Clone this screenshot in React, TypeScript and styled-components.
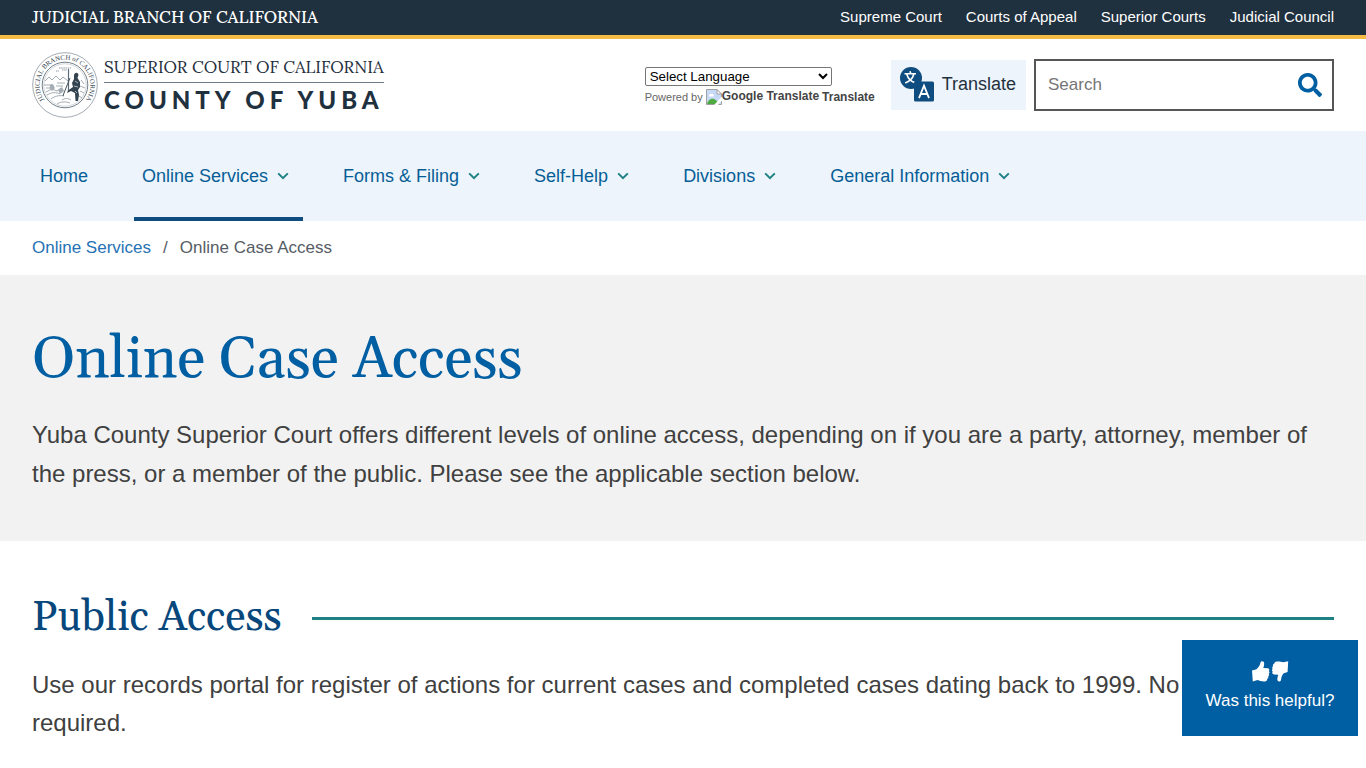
import React from "react";
import styled, { createGlobalStyle } from "styled-components";
import { FaSearch } from "react-icons/fa";

const color = {
  ink: "#1f303e",
  gold: "#f4bc45",
  blue: "#005ea2",
  navy: "#0f4c7f",
  heading: "#07477c",
  pale: "#edf4fb",
  teal: "#1f8083",
  text: "#404040",
  grey: "#f2f2f2",
};

const serif = `Gelasio, Georgia, "Liberation Serif", serif`;

const GlobalStyle = createGlobalStyle`
  *, *::before, *::after { box-sizing: border-box; }
  body {
    margin: 0;
    background: #fff;
    color: ${color.text};
    font-family: "Liberation Sans", Arial, sans-serif;
    font-size: 16px;
  }
  a { color: inherit; text-decoration: none; }
`;

const TopBar = styled.div`
  display: flex;
  justify-content: space-between;
  align-items: center;
  height: 39px;
  padding: 0 32px 2px;
  background: ${color.ink};
  border-bottom: 4px solid ${color.gold};
  color: #fff;
`;

const BranchLink = styled.a`
  font-family: Lora, "Liberation Serif", serif;
  font-size: 17px;
  line-height: 20px;
  font-weight: 500;
`;

const TopLinks = styled.nav`
  display: flex;
  gap: 24px;
  font-size: 15px;
  line-height: 20px;
`;

const Masthead = styled.header`
  display: flex;
  align-items: center;
  justify-content: space-between;
  height: 92px;
  padding: 0 32px;
`;

const Brand = styled.a`
  display: flex;
  align-items: center;
  gap: 6px;
  color: ${color.ink};
`;

const Wordmark = styled.span`
  display: flex;
  flex-direction: column;
  padding-bottom: 2px;
`;

const CourtName = styled.span`
  padding-bottom: 3px;
  border-bottom: 1px solid #6f7b86;
  font-family: Lora, "Liberation Serif", serif;
  font-size: 17px;
  line-height: 24px;
`;

const CountyName = styled.span`
  padding-top: 4px;
  font-family: Lato, sans-serif;
  font-size: 24px;
  line-height: 26px;
  font-weight: 900;
  letter-spacing: 5px;
`;

const Tools = styled.div`
  display: flex;
  align-items: center;
`;

const LanguageWidget = styled.div`
  width: 230px;
  margin-right: 16px;
  padding-top: 4px;
  font-size: 11px;
  color: #666;
`;

const LanguageSelect = styled.select`
  display: block;
  width: 187px;
  height: 19px;
  padding: 0;
  border: 1px solid #767676;
  border-radius: 2px;
  background: #fff;
  color: #000;
  font-family: inherit;
`;

const PoweredBy = styled.div`
  display: flex;
  align-items: center;
  height: 22px;
  white-space: nowrap;
`;

const GoogleLink = styled.a`
  display: flex;
  align-items: center;
  margin-left: 3px;
  color: #444;
  font-size: 12px;
  font-weight: 700;
`;

const GoogleMark = styled.span`
  display: flex;
  align-items: flex-start;
  height: 16px;
  margin-right: 3px;
  line-height: 14px;
`;

const TranslateButton = styled.button`
  display: flex;
  align-items: center;
  gap: 8px;
  height: 50px;
  margin-right: 8px;
  padding: 0 10px 2px 9px;
  border: 0;
  background: ${color.pale};
  color: ${color.ink};
  font-family: inherit;
  font-size: 18px;
`;

const SearchForm = styled.form`
  display: flex;
  align-items: center;
  width: 300px;
  height: 52px;
  border: 2px solid #565656;
`;

const SearchInput = styled.input`
  flex: 1;
  min-width: 0;
  height: 100%;
  padding: 0 12px;
  border: 0;
  outline: 0;
  background: transparent;
  font-family: inherit;
  font-size: 17px;
  &::placeholder { color: #757575; }
`;

const SearchButton = styled.button`
  display: flex;
  padding: 0 10px;
  border: 0;
  background: transparent;
  color: ${color.blue};
`;

const MainNav = styled.nav`
  display: flex;
  gap: 32px;
  height: 90px;
  padding: 0 32px;
  background: ${color.pale};
`;

const NavItem = styled.a<{ $active?: boolean }>`
  display: flex;
  align-items: center;
  gap: 9px;
  padding: 4px 14px 0 8px;
  border-bottom: 4px solid ${(p) => (p.$active ? color.navy : "transparent")};
  color: #075e97;
  font-size: 18px;
  white-space: nowrap;
`;

const Breadcrumb = styled.nav`
  display: flex;
  align-items: center;
  gap: 12px;
  height: 54px;
  padding: 0 32px;
  color: #565c65;
  font-size: 17px;
`;

const CrumbLink = styled.a`
  color: #2672b5;
`;

const Hero = styled.section`
  padding: 48px 32px;
  background: ${color.grey};
`;

const PageTitle = styled.h1`
  margin: 0 0 18px;
  color: ${color.blue};
  font-family: ${serif};
  font-size: 58px;
  font-weight: 400;
  line-height: 74px;
`;

const Lead = styled.p`
  margin: 0;
  font-size: 24px;
  line-height: 39px;
`;

const Content = styled.main`
  padding: 48px 32px;
`;

const SectionTitle = styled.h2`
  display: flex;
  align-items: center;
  gap: 30px;
  margin: 0 0 19px;
  color: ${color.heading};
  font-family: ${serif};
  font-size: 42px;
  font-weight: 400;
  line-height: 58px;
  &::after {
    content: "";
    flex: 1;
    height: 3px;
    background: ${color.teal};
  }
`;

const Body = styled.p`
  margin: 0;
  font-size: 24px;
  line-height: 38px;
`;

const Feedback = styled.button`
  position: fixed;
  right: 8px;
  bottom: 32px;
  display: flex;
  flex-direction: column;
  align-items: center;
  width: 176px;
  height: 96px;
  padding: 20px 0 0;
  border: 0;
  background: ${color.blue};
  color: #fff;
  font-family: inherit;
  font-size: 17px;
  line-height: 34px;
`;

function Seal() {
  return (
    <svg width="66" height="66" viewBox="0 0 66 66" fill="none" aria-hidden="true">
      <defs>
        <path id="seal-ring" d="M14.3 50.2 A25.4 25.4 0 1 1 51.7 50.2" />
      </defs>
      <circle cx="33" cy="33" r="32.3" stroke="#7b8792" strokeWidth=".7" />
      <circle cx="33" cy="33" r="22.8" stroke="#4f5e6b" strokeWidth=".8" />
      <circle cx="33" cy="33" r="21.2" stroke="#a4adb5" strokeWidth=".5" />
      <text fontFamily="Liberation Serif, serif" fontSize="6.8" fill="#33434f">
        <textPath href="#seal-ring" startOffset="50%" textAnchor="middle">
          JUDICIAL BRANCH of CALIFORNIA
        </textPath>
      </text>
      <path d="M27 16h12M24 19h3m3-1h5" stroke="#8a959f" strokeWidth="1" strokeDasharray="1.5 .7" />
      <path
        d="M13 29l4-4 3 3 4-4 4 4 3-3 5 4M12 33h9m-7 3h9m2-5h8m-9 3h7M14 40l6-3 5 2 4-3M15 43c5-3 9-3 13-1M19 47c4-3 8-4 13-3M25 52c3-2 8-3 13-1M30 48c3-2 6-2 9 0M49 28l3 4m-4 2 5 2m-5 3 4 2m-5 3 3 2"
        stroke="#7d8994"
        strokeWidth=".7"
      />
      <path d="M18 33c3-2 5 1 4 4s-5 2-4-4ZM26 38l4-3 2 4-4 3Z" fill="#a4adb5" />
      <path d="M36.5 17v22" stroke="#5d6c78" strokeWidth="1.2" />
      <path d="M38 26l-6 15-1 3" stroke="#45545f" strokeWidth="1" />
      <path d="M42 23c1-3 4-3 4.5 0l-1 3 2.5 4 0 5-2 3 1 5-1 6h-2.500l-.5-8-4-2-4 2 1-2.500 5-3.500-1-4 2-4Z" fill="#33434f" />
      <path d="M43 29l3 2m-4 3 4 1m-3 4 2 2" stroke="#b8c1c8" strokeWidth=".9" />
    </svg>
  );
}

function TranslateIcon() {
  return (
    <svg width="34" height="35" viewBox="0 0 34 35" aria-hidden="true">
      <circle cx="11" cy="11" r="11" fill={color.navy} />
      <path
        d="M4.5 6.8h11.5M10 4.2l.8 2.6M6.8 7.2c1 3.6 4 7 8.2 8.6M13.8 7.2c-1 3.8-4 7-8.600 8.800"
        stroke="#fff"
        strokeWidth="1.6"
        fill="none"
      />
      <rect x="14" y="14.5" width="20" height="20" rx="1.5" fill={color.navy} />
      <path d="M19 31.2l5-12.600 5 12.600M20.700 27h6.600" stroke="#fff" strokeWidth="1.8" fill="none" />
    </svg>
  );
}

function MissingImageIcon() {
  return (
    <svg width="16" height="16" viewBox="0 0 16 16" aria-hidden="true">
      <path d="M.5.5h10.5l4.5 4.5v10.500H.5Z" fill="#c6d9f6" stroke="#a0a0a0" />
      <path d="M11 .5V5h4.500Z" fill="#fff" stroke="#a0a0a0" />
      <path d="M3 6.500a2 2 0 0 1 3-1.500 1.600 1.600 0 0 1 1.500 2.500H3Z" fill="#fff" />
      <path d="M1 15c1-4 4-6 7-5 2 .5 3.500 2.500 4 5Z" fill="#4faa42" />
      <path d="M8.500 15.500L16 7.500v4L12 16H8.500Z" fill="#fff" />
    </svg>
  );
}

function Chevron() {
  return (
    <svg width="12" height="8" viewBox="0 0 12 8" fill="none" aria-hidden="true">
      <path d="M1.200 1.400L6 6.200l4.800-4.800" stroke={color.teal} strokeWidth="2" />
    </svg>
  );
}

function Thumbs() {
  return (
    <svg width="38" height="24" viewBox="0 0 38 24" fill="#fff" aria-hidden="true">
      <path d="M1 10.500L5.500 9.200C7.500 7.500 9 5.500 9.500 2.500 9.800.8 13.300.6 13.200 3.800c0 1.500-.5 3-.9 4.200l4.500.2c1.800.2 2 2 1 2.900 1 .8 1 2-.1 2.700.7.900.5 2-.5 2.600.4 1 0 1.900-1 2.300.1 1.700-.8 2.700-2.500 2.700-3 .1-5-.4-7.200-1.400L1.800 21.500Z" />
      <path d="M37.200 1.200L36.600 12l-3.800 1.200c-1.600 1.800-2.500 3.600-2.700 6.300-.3 2.800-3.700 2.600-3.800-.2 0-1.600.5-3.200 1-4.600l-4.300-.2c-1.800-.2-2.200-2-1.200-2.900-1.100-.8-1.100-2-.1-2.800-.8-.9-.6-2 .4-2.600-.5-1.100 0-2.100 1.100-2.400 0-1.500 1-2.400 2.700-2.400 2.600-.1 4.500.2 6.300.8Z" />
    </svg>
  );
}

const topLinks = ["Supreme Court", "Courts of Appeal", "Superior Courts", "Judicial Council"];

const navItems = [
  { label: "Home" },
  { label: "Online Services", menu: true, active: true },
  { label: "Forms & Filing", menu: true },
  { label: "Self-Help", menu: true },
  { label: "Divisions", menu: true },
  { label: "General Information", menu: true },
];

export default function App() {
  return (
    <>
      <GlobalStyle />
      <TopBar>
        <BranchLink href="#">JUDICIAL BRANCH OF CALIFORNIA</BranchLink>
        <TopLinks aria-label="Judicial branch">
          {topLinks.map((label) => (
            <a href="#" key={label}>{label}</a>
          ))}
        </TopLinks>
      </TopBar>
      <Masthead>
        <Brand href="#">
          <Seal />
          <Wordmark>
            <CourtName>SUPERIOR COURT OF CALIFORNIA</CourtName>
            <CountyName>COUNTY OF YUBA</CountyName>
          </Wordmark>
        </Brand>
        <Tools>
          <LanguageWidget>
            <LanguageSelect aria-label="Language Translate Widget">
              <option>Select Language</option>
            </LanguageSelect>
            <PoweredBy>
              Powered by
              <GoogleLink href="#">
                <GoogleMark><MissingImageIcon />Google Translate</GoogleMark>
                Translate
              </GoogleLink>
            </PoweredBy>
          </LanguageWidget>
          <TranslateButton type="button">
            <TranslateIcon />
            Translate
          </TranslateButton>
          <SearchForm role="search">
            <SearchInput type="search" aria-label="Search" placeholder="Search" />
            <SearchButton type="submit" aria-label="Submit search">
              <FaSearch size={24} />
            </SearchButton>
          </SearchForm>
        </Tools>
      </Masthead>
      <MainNav aria-label="Main">
        {navItems.map((item) => (
          <NavItem href="#" key={item.label} $active={item.active}>
            {item.label}
            {item.menu && <Chevron />}
          </NavItem>
        ))}
      </MainNav>
      <Breadcrumb aria-label="Breadcrumb">
        <CrumbLink href="#">Online Services</CrumbLink>
        <span>/</span>
        <span>Online Case Access</span>
      </Breadcrumb>
      <Hero>
        <PageTitle>Online Case Access</PageTitle>
        <Lead>
          Yuba County Superior Court offers different levels of online access, depending on if you
          are a party, attorney, member of the press, or a member of the public. Please see the
          applicable section below.
        </Lead>
      </Hero>
      <Content>
        <SectionTitle>Public Access</SectionTitle>
        <Body>
          Use our records portal for register of actions for current cases and completed cases
          dating back to 1999. No login required.
        </Body>
      </Content>
      <Feedback type="button">
        <Thumbs />
        Was this helpful?
      </Feedback>
    </>
  );
}
